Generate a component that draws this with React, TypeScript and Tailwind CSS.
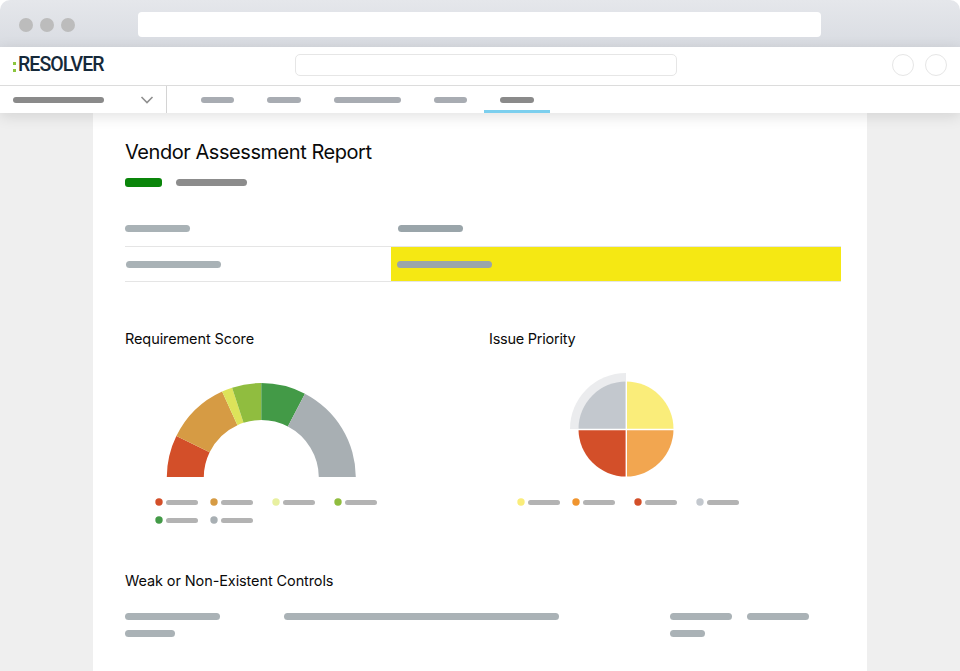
import React from "react";

const polar = (cx: number, cy: number, r: number, deg: number) => {
  const a = (deg * Math.PI) / 180;
  return [cx - r * Math.cos(a), cy - r * Math.sin(a)];
};

// angle runs clockwise from the left end of the gauge
const ringPath = (cx: number, cy: number, r0: number, r1: number, a: number, b: number) => {
  const [x1, y1] = polar(cx, cy, r1, a);
  const [x2, y2] = polar(cx, cy, r1, b);
  const [x3, y3] = polar(cx, cy, r0, b);
  const [x4, y4] = polar(cx, cy, r0, a);
  return `M${x1} ${y1}A${r1} ${r1} 0 0 1 ${x2} ${y2}L${x3} ${y3}A${r0} ${r0} 0 0 0 ${x4} ${y4}Z`;
};

const gauge = [
  { from: 0, to: 26, color: "#d34f29" },
  { from: 26, to: 65.5, color: "#d69b44" },
  { from: 65.5, to: 72, color: "#dde35a" },
  { from: 72, to: 90, color: "#90bd3f" },
  { from: 90, to: 117.5, color: "#439a47" },
  { from: 117.5, to: 180, color: "#a8afb3" },
];

function Bar({ className }: { className: string }) {
  return <div className={`rounded-full ${className}`} />;
}

function Legend({ dot, className = "" }: { dot: string; className?: string }) {
  return (
    <div className={`flex items-center gap-[3px] ${className}`}>
      <svg width="8" height="8" viewBox="0 0 8 8">
        <circle cx="4" cy="4" r="3.7" fill={dot} />
      </svg>
      <div className="h-[5px] w-[32px] rounded-full bg-[#b3b3b3]" />
    </div>
  );
}

function Tab({ width, active }: { width: string; active?: boolean }) {
  return (
    <div
      className={`flex h-[27px] items-center px-[16.5px] pt-[3px] border-b-[3px] ${
        active ? "border-[#7ccfee]" : "border-transparent"
      }`}
    >
      <Bar className={`h-[6px] ${width} ${active ? "bg-[#8a8a8a]" : "bg-[#a8acb2]"}`} />
    </div>
  );
}

export default function App() {
  return (
    <div className="flex h-[671px] w-[960px] flex-col overflow-hidden bg-white font-['Inter',sans-serif]">
      {/* Browser chrome */}
      <div className="flex h-[47px] shrink-0 items-center rounded-t-[10px] bg-gradient-to-b from-[#e5e7eb] to-[#d9dce2] pl-[19px] pt-[2px]">
        <div className="flex gap-[7px]">
          <div className="h-[14px] w-[14px] rounded-full bg-[#bcbcbc]" />
          <div className="h-[14px] w-[14px] rounded-full bg-[#bcbcbc]" />
          <div className="h-[14px] w-[14px] rounded-full bg-[#bcbcbc]" />
        </div>
        <div className="ml-[63px] h-[25px] w-[683px] rounded-[4px] bg-white" />
      </div>

      {/* App header */}
      <div className="relative z-10 shrink-0 bg-white shadow-[0_3px_14px_rgba(0,0,0,0.12)]">
        <div className="flex h-[38px] items-center pb-[2px] pl-[13px] pr-[13px]">
          <div className="flex w-[91px] items-center whitespace-nowrap font-['Roboto',sans-serif] text-[19.5px] leading-none font-medium tracking-[-0.95px] text-[#15293a]">
            <span className="mr-[2px] mt-[4px] flex flex-col gap-[4px]">
              <span className="h-[3px] w-[3px] bg-[#8cc63f]" />
              <span className="h-[3px] w-[3px] bg-[#8cc63f]" />
            </span>
            RESOLVER
          </div>
          <div className="ml-[191px] h-[22px] w-[382px] rounded-[5px] border border-[#e6e6e6]" />
          <div className="ml-auto flex gap-[11px]">
            <div className="h-[22px] w-[22px] rounded-full border border-[#e6e6e6]" />
            <div className="h-[22px] w-[22px] rounded-full border border-[#e6e6e6]" />
          </div>
        </div>
        <div className="flex h-[28px] border-t border-[#dcdcdc]">
          <div className="flex w-[167px] items-center border-r border-[#d4d4d4] pl-[13px]">
            <Bar className="h-[6px] w-[91px] bg-[#8a8a8a]" />
            <svg className="ml-[36px]" width="14" height="8" viewBox="0 0 14 8" fill="none">
              <path d="M1.5 1l5.5 5.5L12.5 1" stroke="#8f8f8f" strokeWidth="1.6" />
            </svg>
          </div>
          <div className="ml-[17.5px] flex">
            <Tab width="w-[33px]" />
            <Tab width="w-[34px]" />
            <Tab width="w-[67px]" />
            <Tab width="w-[33px]" />
            <Tab width="w-[33.5px]" active />
          </div>
        </div>
      </div>

      {/* Report */}
      <div className="flex-1 bg-[#efefef] pl-[93px] pr-[93px]">
        <div className="h-full bg-white pl-[32px] pr-[26px] pt-[26px]">
          <h1 className="text-[20px] leading-[26px] font-normal tracking-[-0.45px] text-[#0a0a0a]">
            Vendor Assessment Report
          </h1>
          <div className="mt-[13px] flex items-center gap-[14px]">
            <div className="h-[9px] w-[37px] rounded-[3px] bg-[#0a850a]" />
            <Bar className="h-[7px] w-[71px] bg-[#8c8c8c]" />
          </div>

          <div className="mt-[38px] grid grid-cols-[266px_1fr] border-b border-[#e5e5e5]">
            <div className="flex h-[22px] items-start border-b border-[#e5e5e5]">
              <Bar className="h-[7px] w-[65px] bg-[#a9b2b6]" />
            </div>
            <div className="flex h-[22px] items-start border-b border-[#e5e5e5] pl-[6.5px]">
              <Bar className="h-[7px] w-[65px] bg-[#9aa5aa]" />
            </div>
            <div className="flex h-[34px] items-center pl-[1px]">
              <Bar className="h-[7px] w-[95px] bg-[#a9b2b6]" />
            </div>
            <div className="flex h-[34px] items-center bg-[#f5e813] pl-[6px]">
              <Bar className="h-[7px] w-[95px] bg-[#9aa5aa]" />
            </div>
          </div>

          <div className="mt-[47px] grid grid-cols-[364px_1fr]">
            <div>
              <h2 className="text-[14.5px] leading-[20px] font-normal tracking-[-0.1px] text-[#0a0a0a]">Requirement Score</h2>
              <svg className="ml-[41px] mt-[32px] block" width="192" height="96" viewBox="166 381 192 96">
                {gauge.map((s) => (
                  <path key={s.from} d={ringPath(261.3, 477.5, 57.5, 94.5, s.from, s.to)} fill={s.color} />
                ))}
              </svg>
              <div className="ml-[30px] mt-[21px] flex">
                <Legend dot="#d34f29" />
                <Legend dot="#d69b44" className="ml-[12px]" />
                <Legend dot="#e8f0a0" className="ml-[19px]" />
                <Legend dot="#90bd3f" className="ml-[19px]" />
              </div>
              <div className="ml-[30px] mt-[10px] flex">
                <Legend dot="#439a47" />
                <Legend dot="#a8afb3" className="ml-[12px]" />
              </div>
            </div>
            <div>
              <h2 className="text-[14.5px] leading-[20px] font-normal tracking-[-0.25px] text-[#0a0a0a]">Issue Priority</h2>
              <svg className="ml-[80px] mt-[23px] block" width="106" height="106" viewBox="569 372 106 106">
                <path d="M626 429V373A56 56 0 0 0 570 429Z" fill="#ebecee" />
                <path d="M626 429V381.5A47.5 47.5 0 0 0 578.5 429Z" fill="#c3c8ce" />
                <path d="M626 429V381.5A47.5 47.5 0 0 1 673.5 429Z" fill="#faed7a" />
                <path d="M626 429H673.5A47.5 47.5 0 0 1 626 476.5Z" fill="#f2a650" />
                <path d="M626 429V476.5A47.5 47.5 0 0 1 578.5 429Z" fill="#d34f29" />
                <path d="M626.3 381V478M578 429.5H675" stroke="#fff" strokeWidth="1.4" />
              </svg>
              <div className="ml-[28px] mt-[20px] flex">
                <Legend dot="#faed7a" />
                <Legend dot="#f0952f" className="ml-[12px]" />
                <Legend dot="#d34f29" className="ml-[19px]" />
                <Legend dot="#c3c8ce" className="ml-[19px]" />
              </div>
            </div>
          </div>

          <h2 className="mt-[47px] text-[14.5px] leading-[20px] font-normal tracking-[-0.1px] text-[#0a0a0a]">
            Weak or Non-Existent Controls
          </h2>
          <div className="mt-[22px] grid grid-cols-[159px_386px_1fr]">
            <div className="flex flex-col gap-[10px]">
              <Bar className="h-[7px] w-[95px] bg-[#aab2b6]" />
              <Bar className="h-[7px] w-[50px] bg-[#aab2b6]" />
            </div>
            <div>
              <Bar className="h-[7px] w-[275px] bg-[#aab2b6]" />
            </div>
            <div className="flex flex-col gap-[10px]">
              <div className="flex gap-[15px]">
                <Bar className="h-[7px] w-[62px] bg-[#aab2b6]" />
                <Bar className="h-[7px] w-[62px] bg-[#aab2b6]" />
              </div>
              <Bar className="h-[7px] w-[35px] bg-[#aab2b6]" />
            </div>
          </div>
        </div>
      </div>
    </div>
  );
}
